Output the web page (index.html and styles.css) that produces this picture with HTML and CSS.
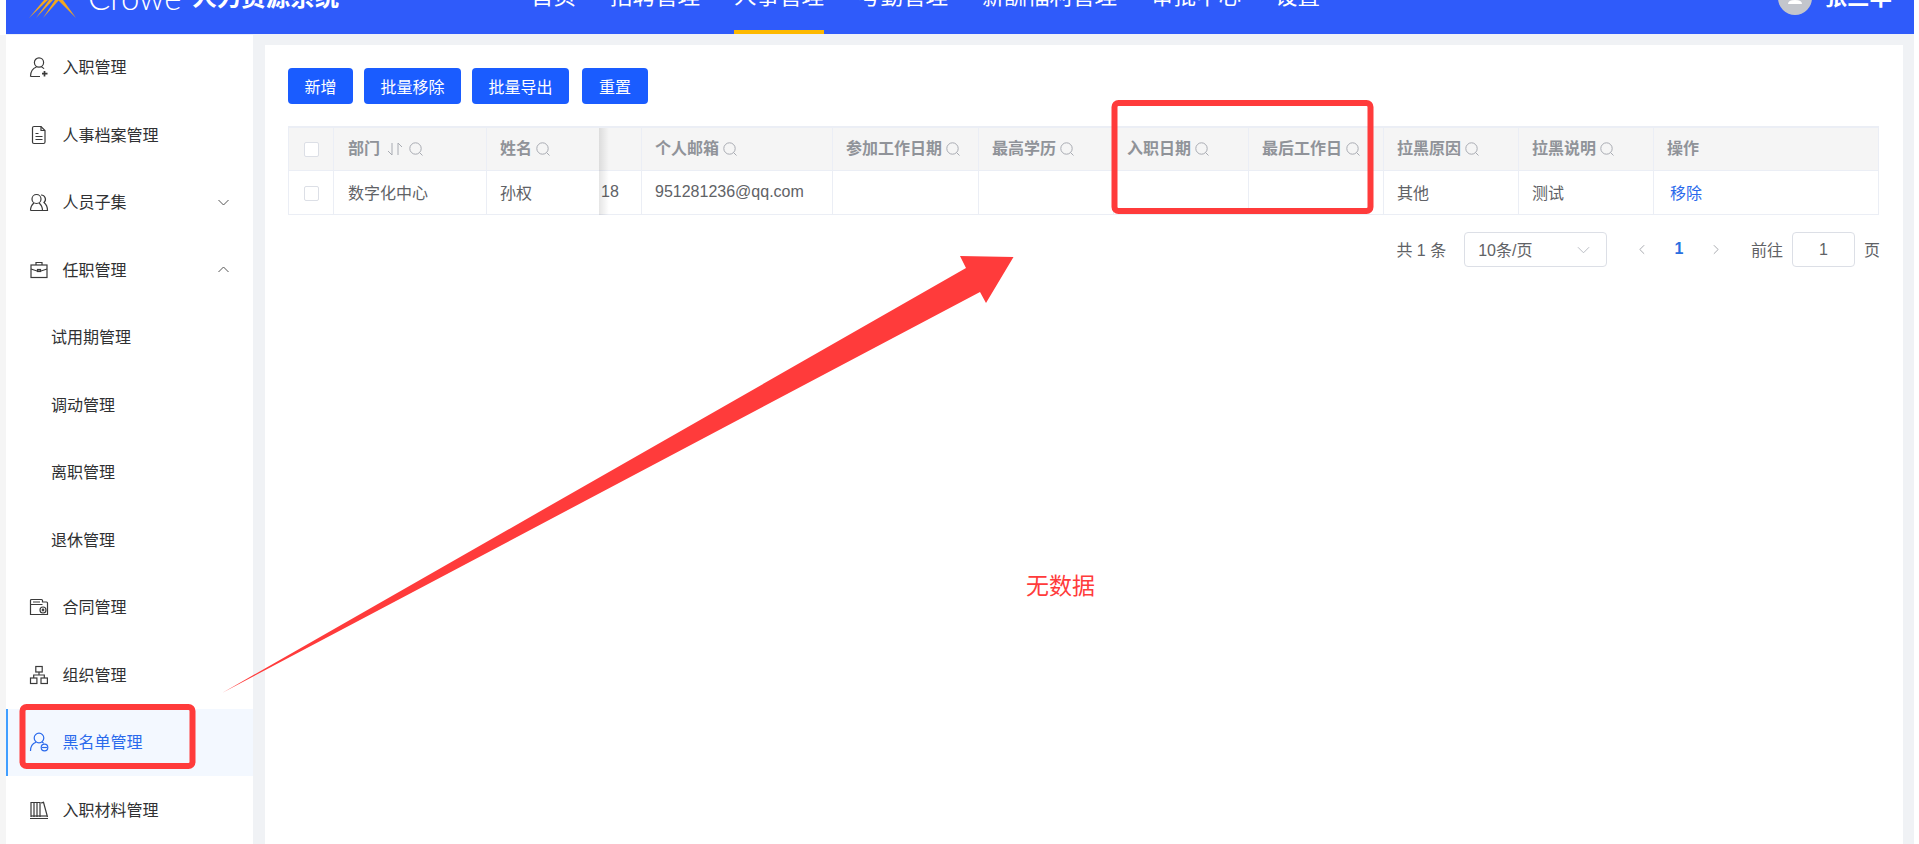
FILE: index.html
```html
<!DOCTYPE html>
<html lang="zh-CN">
<head>
<meta charset="utf-8">
<title>人力资源系统</title>
<link rel="stylesheet" href="styles.css">
</head>
<body>
<div class="app">
  <header class="topbar">
    <div class="brand">
      <svg class="logo-mark" width="48" height="18" viewBox="0 0 48 18"><g fill="#f2a71f"><polygon points="0,18 15,0 19,0"/><polygon points="7,18 20,0 24,0"/><polygon points="14,18 26,0 30,0"/><polygon points="47,18 29,0 34,0"/></g></svg>
      <span class="logo-word">Crowe</span>
      <span class="logo-title">人力资源系统</span>
    </div>
    <nav class="nav">
      <a class="nav-item">首页</a>
      <a class="nav-item">招聘管理</a>
      <a class="nav-item is-current">人事管理</a>
      <a class="nav-item">考勤管理</a>
      <a class="nav-item">薪酬福利管理</a>
      <a class="nav-item">审批中心</a>
      <a class="nav-item">设置</a>
    </nav>
    <div class="user">
      <svg class="avatar" width="34" height="34" viewBox="0 0 34 34"><circle cx="17" cy="17" r="17" fill="#c3c6cc"/><circle cx="17" cy="11" r="5" fill="#fff"/><path d="M10 23q0-4 7-4t7 4z" fill="#fff"/></svg>
      <span class="user-name">张三丰</span>
    </div>
  </header>
  <div class="shell">
    <aside class="side">
      <div class="side-item">
        <svg class="ico" viewBox="0 0 20 20"><circle cx="10" cy="5.500" r="4.600"/><path d="M1.500 19.500c0-4.500 2-8 6-9.500M12.500 10c1 .4 2 1 2.500 1.800M1.500 19.500h9.500"/><path d="M15.500 14v5.500M13 16.700h5.500" stroke-width="1.700"/></svg>
        <span>入职管理</span>
      </div>
      <div class="side-item">
        <svg class="ico" viewBox="0 0 20 20"><path d="M5 1.500h7l4 4v11.500a1.500 1.500 0 0 1-1.500 1.500h-9.500a1.500 1.500 0 0 1-1.500-1.500v-14a1.500 1.500 0 0 1 1.500-1.500z"/><path d="M12 1.500v4h4M6.500 8.500h3M6.500 11.500h7M6.500 14.500h7"/></svg>
        <span>人事档案管理</span>
      </div>
      <div class="side-item">
        <svg class="ico" viewBox="0 0 20 20"><circle cx="7.500" cy="7" r="4.500"/><path d="M1.500 18.500c0-4 1-5.500 3.500-7.500M10 11c2.500 2 3.500 3.500 3.500 7.500h-12"/><path d="M12 3a4.300 4.300 0 0 1 3 7.500c2.500 2 3.500 4 3.500 8h-5"/></svg>
        <span>人员子集</span>
        <svg class="chev" viewBox="0 0 11 7"><path d="M.5 1l5 5 5-5"/></svg>
      </div>
      <div class="side-item">
        <svg class="ico" viewBox="0 0 20 20"><rect x="2" y="5" width="16" height="12.500"/><path d="M7 5V2.500h6V5M2 9l6 2h4l6-2"/><rect x="8.500" y="9.500" width="3" height="2"/></svg>
        <span>任职管理</span>
        <svg class="chev" viewBox="0 0 11 7"><path d="M.5 6l5-5 5 5"/></svg>
      </div>
      <div class="side-item is-sub"><span>试用期管理</span></div>
      <div class="side-item is-sub"><span>调动管理</span></div>
      <div class="side-item is-sub"><span>离职管理</span></div>
      <div class="side-item is-sub"><span>退休管理</span></div>
      <div class="side-item">
        <svg class="ico" viewBox="0 0 20 20"><path d="M1.500 17.500V3.500a1 1 0 0 1 1-1h10a1 1 0 0 1 1 1V5h4a1 1 0 0 1 1 1v11.500z"/><path d="M4 5h7M1.500 7.500h12" /><circle cx="14" cy="13" r="3"/><circle cx="14" cy="13" r=".8"/></svg>
        <span>合同管理</span>
      </div>
      <div class="side-item">
        <svg class="ico" viewBox="0 0 20 20"><rect x="6.800" y="1.500" width="6.400" height="5.500"/><rect x="1.500" y="13" width="6.400" height="5.500"/><rect x="12" y="13" width="6.400" height="5.500"/><path d="M10 7v3M4.700 13v-3h10.600v3"/></svg>
        <span>组织管理</span>
      </div>
      <div class="side-item is-active">
        <svg class="ico" viewBox="0 0 20 20"><circle cx="10" cy="6" r="4.800"/><path d="M1.500 19c0-4.500 2-7.500 5.500-8.700M13 10.300c.6.200 1.200.5 1.700.9"/><circle cx="15.500" cy="15.500" r="3.300"/><path d="M13 15.500h5"/></svg>
        <span>黑名单管理</span>
      </div>
      <div class="side-item">
        <svg class="ico" viewBox="0 0 20 20"><path d="M1 18.500h18M2 17V2.500h3V17M5 17V2.500h3V17M8 17V2.500h3V17M12 3l2.500-.7L18.500 17"/><path d="M2 16h16" /></svg>
        <span>入职材料管理</span>
      </div>
    </aside>
    <main class="main">
      <section class="panel">
        <div class="toolbar">
          <button class="btn">新增</button>
          <button class="btn">批量移除</button>
          <button class="btn">批量导出</button>
          <button class="btn btn-last">重置</button>
        </div>
        <table class="grid">
          <colgroup>
            <col class="c-check"><col class="c-dept"><col class="c-name"><col class="c-phone"><col class="c-mail"><col class="c-work"><col class="c-std"><col class="c-std"><col class="c-std"><col class="c-std"><col class="c-std"><col>
          </colgroup>
          <thead>
            <tr>
              <th class="center"><span class="check"></span></th>
              <th class="dept"><span class="th-in">部门<svg class="sort" viewBox="0 0 18 14"><path d="M6 1v12L2 9M12 13V1l4 4"/></svg><svg class="find" viewBox="0 0 14 14"><circle cx="6.500" cy="6.500" r="5.700"/><path d="M10.500 10.500l3 3"/></svg></span></th>
              <th class="fixed-end"><span class="th-in">姓名<svg class="find" viewBox="0 0 14 14"><circle cx="6.500" cy="6.500" r="5.700"/><path d="M10.500 10.500l3 3"/></svg></span></th>
              <th></th>
              <th><span class="th-in">个人邮箱<svg class="find" viewBox="0 0 14 14"><circle cx="6.500" cy="6.500" r="5.700"/><path d="M10.500 10.500l3 3"/></svg></span></th>
              <th><span class="th-in">参加工作日期<svg class="find" viewBox="0 0 14 14"><circle cx="6.500" cy="6.500" r="5.700"/><path d="M10.500 10.500l3 3"/></svg></span></th>
              <th><span class="th-in">最高学历<svg class="find" viewBox="0 0 14 14"><circle cx="6.500" cy="6.500" r="5.700"/><path d="M10.500 10.500l3 3"/></svg></span></th>
              <th><span class="th-in">入职日期<svg class="find" viewBox="0 0 14 14"><circle cx="6.500" cy="6.500" r="5.700"/><path d="M10.500 10.500l3 3"/></svg></span></th>
              <th><span class="th-in">最后工作日<svg class="find" viewBox="0 0 14 14"><circle cx="6.500" cy="6.500" r="5.700"/><path d="M10.500 10.500l3 3"/></svg></span></th>
              <th><span class="th-in">拉黑原因<svg class="find" viewBox="0 0 14 14"><circle cx="6.500" cy="6.500" r="5.700"/><path d="M10.500 10.500l3 3"/></svg></span></th>
              <th><span class="th-in">拉黑说明<svg class="find" viewBox="0 0 14 14"><circle cx="6.500" cy="6.500" r="5.700"/><path d="M10.500 10.500l3 3"/></svg></span></th>
              <th>操作</th>
            </tr>
          </thead>
          <tbody>
            <tr>
              <td class="center"><span class="check"></span></td>
              <td class="dept">数字化中心</td>
              <td class="fixed-end">孙权</td>
              <td class="clip-cell">18</td>
              <td>951281236@qq.com</td>
              <td></td>
              <td></td>
              <td></td>
              <td></td>
              <td>其他</td>
              <td>测试</td>
              <td><a class="link">移除</a></td>
            </tr>
          </tbody>
        </table>
        <div class="pager">
          <span>共 1 条</span>
          <div class="select"><span>10条/页</span><svg class="select-chev" viewBox="0 0 14 8"><path d="M1 1l6 6 6-6"/></svg></div>
          <svg class="pg-arrow arrow-prev" viewBox="0 0 7 12"><path d="M6 1L1 6l5 5"/></svg>
          <span class="pg-num">1</span>
          <svg class="pg-arrow arrow-next" viewBox="0 0 7 12"><path d="M1 1l5 5-5 5"/></svg>
          <span class="pg-go">前往</span>
          <div class="pg-input">1</div>
          <span class="pg-unit">页</span>
        </div>
      </section>
    </main>
  </div>
</div>
<div class="annot">
  <svg class="annot-svg" width="1919" height="844" viewBox="0 0 1919 844">
    <polygon class="a-fill" points="222,693 966,268 960,256 1013.500,257 986,303 980,292"/>
    <rect class="a-box" x="1114.500" y="103" width="256" height="108" rx="4"/>
    <rect class="a-box" x="22.500" y="707" width="170" height="59" rx="4"/>
  </svg>
  <div class="nodata">无数据</div>
</div>
</body>
</html>
```
FILE: styles.css
```css
* { box-sizing: border-box; }
html, body { margin: 0; height: 844px; overflow: hidden; background: #fff; }
body {
  font-family: "Liberation Sans", "Noto Sans CJK SC", sans-serif;
  font-size: 16px;
  color: #303133;
}
.app {
  margin: 0 5px 0 0;
  padding-left: 6px;
  height: 844px;
  display: flex;
  flex-direction: column;
  background: linear-gradient(#fff, #fff) 0 0/6px 35px no-repeat, #f5f5f5;
}

.topbar {
  flex: none;
  height: 35px;
  border-bottom: 1px solid #eef0f8;
  background: #2f5bfa;
  display: flex;
  align-items: flex-end;
  padding: 0 22px 0 23px;
  color: #fff;
  position: relative;
  z-index: 2;
  overflow: hidden;
}
.brand { width: 502px; flex: none; display: flex; align-items: flex-end; }
.logo-mark { margin-bottom: 16px; flex: none; }
.logo-word {
  font-family: Lato, sans-serif;
  font-weight: 300;
  font-size: 33px;
  line-height: 33px;
  margin: 0 11px 0 11px;
  padding-bottom: 20px;
  height: 53px;
}
.logo-title { font-size: 24.500px; font-weight: 700; line-height: 30px; margin-bottom: 21px; white-space: nowrap; }
.nav { display: flex; gap: 34px; align-items: flex-end; }
.nav-item {
  font-size: 22.500px;
  line-height: 30px;
  height: 52px;
  white-space: nowrap;
  border-bottom: 4px solid transparent;
}
.nav-item.is-current { border-bottom-color: #fdb900; }
.user { margin-left: auto; display: flex; align-items: flex-end; }
.avatar { margin-bottom: 19px; margin-right: 12px; flex: none; }
.user-name { font-size: 22.500px; font-weight: 700; line-height: 30px; margin-bottom: 21px; }

.shell { flex: 1; min-height: 0; display: flex; }

/* sidebar */
.side { flex: none; width: 247px; margin-top: -1.500px; background: #fff; }
.side-item {
  height: 67.500px;
  display: flex;
  align-items: center;
  padding: 0 24px 0 23px;
  color: #303133;
  white-space: nowrap;
}
.side-item > span { flex: 1; padding-bottom: 2px; }
.ico {
  flex: none;
  width: 20px;
  height: 20px;
  margin-right: 13.500px;
  fill: none;
  stroke: #3a3a3a;
  stroke-width: 1.200;
}
.chev { flex: none; width: 11px; height: 7px; fill: none; stroke: #555; stroke-width: 1; }
.side-item.is-sub { padding-left: 45px; }
.side-item.is-active {
  background: #f3f8ff;
  color: #2a6aec;
  border-left: 2px solid #409eff;
  padding-left: 21px;
}
.side-item.is-active .ico { stroke: #2a6aec; }

/* main */
.main {
  flex: 1;
  min-width: 0;
  background: #f0f2f5;
  padding: 10px 11px 0 12px;
}
.panel { background: #fff; height: 100%; padding: 23px 24px 0 23px; }
.toolbar { display: flex; gap: 11px; margin-bottom: 22px; }
.btn {
  height: 36px;
  width: 97px;
  border: 0;
  border-radius: 4px;
  background: #1a5cff;
  color: #fff;
  font: inherit;
  padding: 0;
}
.btn:first-child { width: 65px; }
.btn-last { width: 66px; margin-left: 2px; }

/* table */
.grid {
  width: 100%;
  table-layout: fixed;
  border-collapse: separate;
  border-spacing: 0;
  border-left: 1px solid #ebeef5;
  border-top: 2px solid #ebeef5;
}
.c-check { width: 45px; }
.c-dept { width: 153px; }
.c-name { width: 112px; }
.c-phone { width: 43px; }
.c-mail { width: 191px; }
.c-work { width: 146px; }
.c-std { width: 135px; }
.grid th, .grid td {
  padding: 0 0 0 13px;
  border-right: 1px solid #ebeef5;
  border-bottom: 1px solid #ebeef5;
  text-align: left;
  white-space: nowrap;
  overflow: visible;
}
.grid th {
  height: 43px;
  background: #f5f5f5;
  color: #909399;
  font-weight: 700;
  padding-bottom: 5px;
}
.grid td { height: 44px; color: #606266; padding-bottom: 2px; }
.grid .center { padding: 0; text-align: center; }
.grid .dept { padding-left: 14px; }
.grid .fixed-end { position: relative; border-right: 0; }
.grid .fixed-end::after {
  content: "";
  position: absolute;
  left: 100%;
  top: 0;
  bottom: -1px;
  width: 10px;
  background: linear-gradient(90deg, rgba(0, 0, 0, .1), rgba(0, 0, 0, 0));
}
.grid .clip-cell { padding-left: 2px; }
.check {
  display: inline-block;
  vertical-align: middle;
  width: 15px;
  height: 15px;
  background: #fff;
  border: 1px solid #dcdfe6;
  border-radius: 2px;
}
.th-in { display: inline-flex; align-items: center; }
.find { width: 14px; height: 14px; margin: 5px 0 0 4px; fill: none; stroke: #a8abb2; stroke-width: 1; flex: none; }
.sort { width: 18px; height: 14px; margin: 5px 1px 0 6px; fill: none; stroke: #a8abb2; stroke-width: 1; flex: none; }
.link { color: #2a6aec; padding-left: 3px; }

/* pagination */
.pager {
  margin-top: 17px;
  margin-right: -1px;
  display: flex;
  justify-content: flex-end;
  align-items: center;
  height: 35px;
  color: #606266;
}
.pager > span, .select > span { padding-bottom: 2px; }
.select {
  width: 143px;
  height: 35px;
  margin-left: 18px;
  padding: 0 16px 0 13px;
  border: 1px solid #dcdfe6;
  border-radius: 4px;
  display: flex;
  align-items: center;
  justify-content: space-between;
}
.select-chev { width: 13px; height: 8px; fill: none; stroke: #b4b8bf; stroke-width: 1; }
.pg-arrow { width: 6px; height: 11px; fill: none; stroke: #9a9da3; stroke-width: 1; flex: none; }
.arrow-prev { margin: 0 0 0 31.800px; }
.arrow-next { margin-left: 0; }
.pg-num { width: 70px; text-align: center; color: #2a6fe0; font-weight: 700; margin: 0 -1px; }
.pg-go { margin-left: 32px; white-space: nowrap; }
.pg-input {
  width: 63px;
  height: 35px;
  margin-left: 9px;
  border: 1px solid #dcdfe6;
  border-radius: 4px;
  display: flex;
  align-items: center;
  justify-content: center;
}
.pg-unit { margin-left: 9px; }

/* annotations drawn over the screenshot */
.annot { position: absolute; left: 0; top: 0; width: 1919px; height: 844px; pointer-events: none; z-index: 5; }
.annot-svg { display: block; }
.a-fill { fill: #ff3b3b; }
.a-box { fill: none; stroke: #ff3b3b; stroke-width: 6; }
.nodata { position: absolute; left: 1026px; top: 570px; font-size: 23px; line-height: 32px; color: #ff3b3b; white-space: nowrap; }
```
